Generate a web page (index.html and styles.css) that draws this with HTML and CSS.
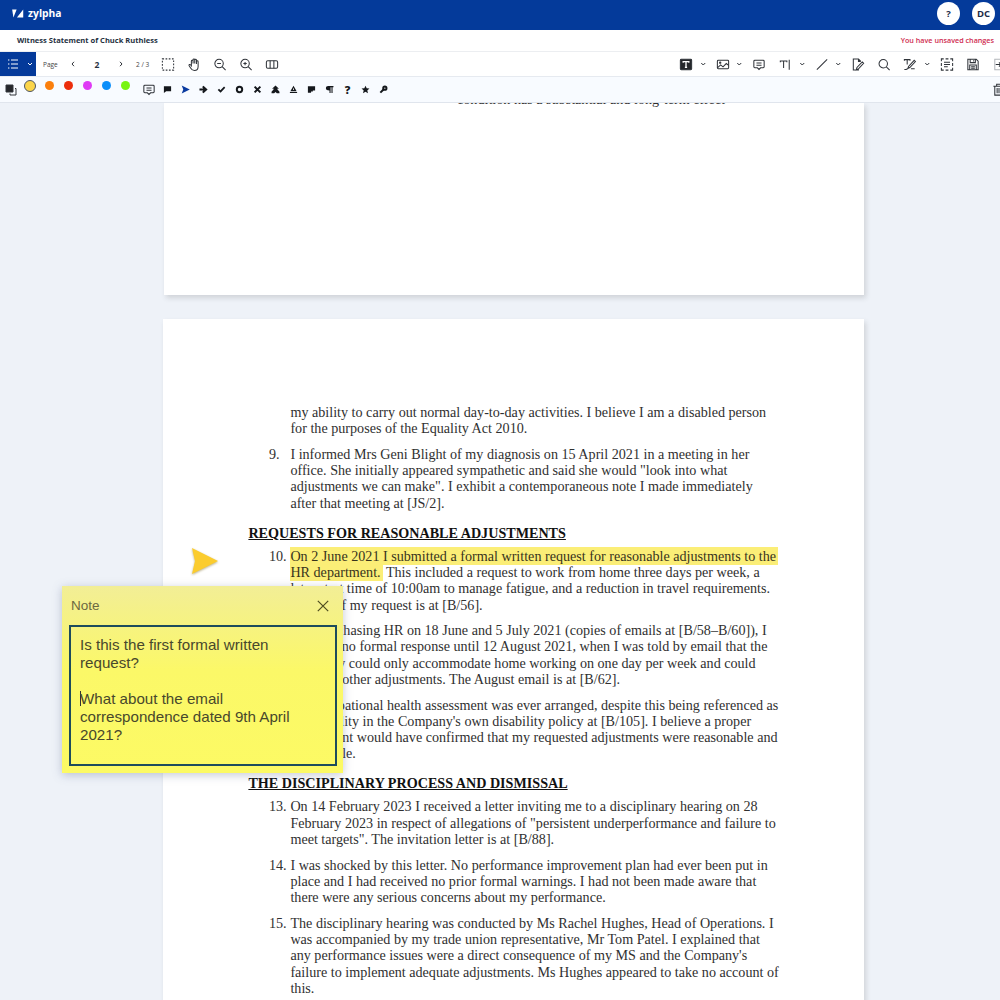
FILE: index.html
```html
<!DOCTYPE html>
<html lang="en">
<head>
    <meta charset="UTF-8">
    <meta name="viewport" content="width=device-width, initial-scale=1.0">
    <title>Witness Statement of Chuck Ruthless</title>
    <link rel="stylesheet" href="styles.css">
</head>
<body>
    <header class="topbar">
        <div class="brand">
            <svg class="logo" viewBox="0 0 13 10"><path d="M0 .5h5L1.4 9.5zM12.3 9.5h-7L12.3.5z"/></svg>
            <span>zylpha</span>
        </div>
        <div class="user">
            <span class="round help">?</span>
            <span class="round">DC</span>
        </div>
    </header>

    <div class="titlebar">
        <h1>Witness Statement of Chuck Ruthless</h1>
        <span class="unsaved">You have unsaved changes</span>
    </div>

    <div class="toolbar">
        <button class="menu">
            <svg class="list" viewBox="0 0 12 12"><path d="M1 2h1.4M1 6h1.4M1 10h1.4M4 2h7M4 6h7M4 10h7"/></svg>
            <svg class="chev" viewBox="0 0 6 6"><path d="M1 2l2 2 2-2"/></svg>
        </button>
        <span class="page-label">Page</span>
        <div class="pager">
            <svg class="chev" viewBox="0 0 6 6"><path d="M4 .8L2 3l2 2.2"/></svg>
            <b>2</b>
            <svg class="chev" viewBox="0 0 6 6"><path d="M2 .8L4 3 2 5.200"/></svg>
        </div>
        <span class="total">2 / 3</span>
        <div class="tools">
            <svg class="icon" viewBox="0 0 16 16"><rect x="2" y="2" width="12" height="12" stroke-dasharray="1.8 1.6"/></svg>
            <svg class="icon" viewBox="0 0 16 16"><path d="M5.200 9.500V4.300a.9.9 0 0 1 1.800 0V7 3a.9.9 0 0 1 1.800 0v4-3.600a.9.9 0 0 1 1.800 0V7.400 5a.9.9 0 0 1 1.800 0v5c0 2.700-1.500 4.300-4 4.300-2 0-3-.8-4-2.600L2.700 9c-.3-.9.8-1.500 1.500-.7z"/></svg>
            <svg class="icon" viewBox="0 0 16 16"><circle cx="7" cy="7" r="4.500"/><path d="M10.300 10.300L14 14M5 7h4"/></svg>
            <svg class="icon" viewBox="0 0 16 16"><circle cx="7" cy="7" r="4.500"/><path d="M10.300 10.300L14 14M5.200 7h3.600M7 5.200v3.600"/></svg>
            <svg class="icon" viewBox="0 0 16 16"><rect x="2" y="4" width="12" height="8" rx="1.500"/><path d="M6 4v8M10 4v8"/></svg>
        </div>
        <div class="tools right">
            <svg class="icon" viewBox="0 0 16 16"><rect class="solid" x="2" y="2.500" width="12" height="11" rx="1"/><path class="white" d="M5 6.200V5h6v1.200M8 5v6M6.800 11h2.400"/></svg>
            <svg class="chev drop" viewBox="0 0 6 6"><path d="M1 2l2 2 2-2"/></svg>
            <svg class="icon" viewBox="0 0 16 16"><rect x="2" y="3.500" width="12" height="9" rx="1"/><path d="M2 11.500l3.500-3 2.500 2 3.500-3.500 2.500 2"/><circle cx="5" cy="6" r=".7"/></svg>
            <svg class="chev drop" viewBox="0 0 6 6"><path d="M1 2l2 2 2-2"/></svg>
            <svg class="icon" viewBox="0 0 16 16"><path d="M3.500 3.500h9a1 1 0 0 1 1 1v6a1 1 0 0 1-1 1H9.700L8 13.300l-1.700-1.800H3.500a1 1 0 0 1-1-1v-6a1 1 0 0 1 1-1zM5.300 6.300h5.400M5.300 8.700h5.400"/></svg>
            <svg class="icon" viewBox="0 0 16 16"><path d="M3 5.500V4.300h7v1.200M6.500 4.300v7.400M12.500 3v10.500"/></svg>
            <svg class="chev drop" viewBox="0 0 6 6"><path d="M1 2l2 2 2-2"/></svg>
            <svg class="icon" viewBox="0 0 16 16"><path d="M2.500 13.500l11-11"/></svg>
            <svg class="chev drop" viewBox="0 0 6 6"><path d="M1 2l2 2 2-2"/></svg>
            <svg class="icon" viewBox="0 0 16 16"><path d="M9 13.800H3V2.200h5.500L11 4.700M12.500 5.200l1.500 1.500-5.500 6-2.300 1 .7-2.500zM8.500 2.200v2.500H11"/></svg>
            <svg class="icon" viewBox="0 0 16 16"><circle cx="7.200" cy="7.200" r="4.500"/><path d="M10.500 10.500L14 14"/></svg>
            <svg class="icon" viewBox="0 0 16 16"><path d="M2 4V2.800h6V4M5 2.800V8M12.500 3.500l1.300 1.300-6 6.500-2 .8.600-2zM2 13.300c2 .6 3-1 4.500-1.200M9 12.500h4"/></svg>
            <svg class="chev drop" viewBox="0 0 6 6"><path d="M1 2l2 2 2-2"/></svg>
            <svg class="icon" viewBox="0 0 16 16"><path d="M2 4.500V2h2.500M6.500 2h3M11.500 2H14v2.500M14 6.500v3M14 11.500V14h-2.500M9.500 14h-3M4.500 14H2v-2.500M2 9.500v-3M4.800 5.500h6.400M4.800 8h6.400M4.800 10.500h4"/></svg>
            <svg class="icon" viewBox="0 0 16 16"><path d="M2.500 2.500h9l2 2v9h-11zM5 2.500v3.500h5.500V2.500M8.700 3.500v1.200M4.500 13.500V8.500h7v5M6 10.300h4M6 12h4"/></svg>
            <svg class="icon exit" viewBox="0 0 16 16"><path class="faint" d="M14 2.500H3.500v11H14"/><path d="M4.500 8H10M8 5.800L10.200 8 8 10.200"/></svg>
        </div>
    </div>

    <div class="toolbar stamps">
        <svg class="layers" viewBox="0 0 12 12"><path d="M10 4.500h1v6.500H5v-1.500"/><path class="solid" d="M1 1h7v7H1z"/></svg>
        <div class="swatches">
            <i class="dot yellow selected"></i>
            <i class="dot orange"></i>
            <i class="dot red"></i>
            <i class="dot purple"></i>
            <i class="dot blue"></i>
            <i class="dot green"></i>
        </div>
        <div class="marks">
            <svg class="icon comment" viewBox="0 0 16 16"><path d="M3.500 3.500h9a1 1 0 0 1 1 1v6a1 1 0 0 1-1 1H9.700L8 13.300l-1.700-1.800H3.500a1 1 0 0 1-1-1v-6a1 1 0 0 1 1-1zM5.300 6.300h5.400M5.300 8.700h5.400"/></svg>
            <svg class="mark" viewBox="0 0 10 10"><path d="M1 1.500h8v5.500H3.500L1 9z"/></svg>
            <svg class="mark active" viewBox="0 0 10 10"><path d="M.8.6L9.800 5 .8 9.400 2.500 5z"/></svg>
            <svg class="mark" viewBox="0 0 10 10"><path d="M.5 3.900h4.200L3.500 2.200 5 .9 9.600 5 5 9.100 3.500 7.800 4.700 6.100H.5z"/></svg>
            <svg class="mark" viewBox="0 0 10 10"><path d="M.8 5.500l1.500-1.300 1.500 1.500 4-4L9.200 3 4 8.500z"/></svg>
            <svg class="mark line" viewBox="0 0 10 10"><circle cx="5" cy="5" r="3"/></svg>
            <svg class="mark line" viewBox="0 0 10 10"><path d="M1.800 1.800l6.400 6.400M8.200 1.800L1.800 8.200"/></svg>
            <svg class="mark" viewBox="0 0 10 10"><path d="M5 .6l3.800 3.700H6.600L9.400 7.500v1.700H6.500L5 7.800 3.500 9.200H.6V7.500l2.800-3.200H1.200z"/></svg>
            <svg class="mark" viewBox="0 0 10 10"><path d="M5 .8L8.500 7h-7zM1 7.700h8V9H1z"/><path class="slit" d="M5 3.800v1.700"/></svg>
            <svg class="mark" viewBox="0 0 10 10"><path d="M1 1.500h8V6H6.500v1.200H4.500V8.500H1z"/></svg>
            <svg class="mark" viewBox="0 0 10 10"><path d="M3.500 1H9.400v1.500H8.400V9H7.200V2.500H6.200V9H5V6C2.500 6 1 5 1 3.500S2 1 3.500 1z"/></svg>
            <span class="mark question">?</span>
            <svg class="mark" viewBox="0 0 10 10"><path d="M5 .7l1.300 2.900 3.100.3L7 6l.8 3.200L5 7.500 2.200 9.200 3 6 .6 3.900l3.100-.3z"/></svg>
            <svg class="mark line" viewBox="0 0 10 10"><circle cx="6.500" cy="3.500" r="1.800"/><path d="M5 5L1.500 8.500"/></svg>
        </div>
        <svg class="icon trash" viewBox="0 0 16 16"><path d="M2 4.500h12M5.500 4.500v-2h5v2M3.500 4.500V14h9V4.500M6 6.500V12M8 6.500V12M10 6.500V12"/></svg>
    </div>

    <main class="viewer">
        <section class="page first">
            <p>condition has a substantial and long-term effect</p>
        </section>

        <section class="page second">
            <div class="item">
                <span class="num"></span>
                <p>my ability to carry out normal day-to-day activities. I believe I am a disabled person<br>
                for the purposes of the Equality Act 2010.</p>
            </div>
            <div class="item">
                <span class="num">9.</span>
                <p>I informed Mrs Geni Blight of my diagnosis on 15 April 2021 in a meeting in her<br>
                office. She initially appeared sympathetic and said she would "look into what<br>
                adjustments we can make". I exhibit a contemporaneous note I made immediately<br>
                after that meeting at [JS/2].</p>
            </div>
            <h2>REQUESTS FOR REASONABLE ADJUSTMENTS</h2>
            <div class="item">
                <span class="num">10.</span>
                <p><mark>On 2 June 2021 I submitted a formal written request for reasonable adjustments to the</mark><br>
                <mark>HR department.</mark> This included a request to work from home three days per week, a<br>
                later start time of 10:00am to manage fatigue, and a reduction in travel requirements.<br>
                A copy of my request is at [B/56].</p>
            </div>
            <div class="item">
                <span class="num">11.</span>
                <p>Despite chasing HR on 18 June and 5 July 2021 (copies of emails at [B/58–B/60]), I<br>
                received no formal response until 12 August 2021, when I was told by email that the<br>
                Company could only accommodate home working on one day per week and could<br>
                make no other adjustments. The August email is at [B/62].</p>
            </div>
            <div class="item">
                <span class="num">12.</span>
                <p>No occupational health assessment was ever arranged, despite this being referenced as<br>
                a possibility in the Company's own disability policy at [B/105]. I believe a proper<br>
                assessment would have confirmed that my requested adjustments were reasonable and<br>
                practicable.</p>
            </div>
            <h2>THE DISCIPLINARY PROCESS AND DISMISSAL</h2>
            <div class="item">
                <span class="num">13.</span>
                <p>On 14 February 2023 I received a letter inviting me to a disciplinary hearing on 28<br>
                February 2023 in respect of allegations of "persistent underperformance and failure to<br>
                meet targets". The invitation letter is at [B/88].</p>
            </div>
            <div class="item">
                <span class="num">14.</span>
                <p>I was shocked by this letter. No performance improvement plan had ever been put in<br>
                place and I had received no prior formal warnings. I had not been made aware that<br>
                there were any serious concerns about my performance.</p>
            </div>
            <div class="item">
                <span class="num">15.</span>
                <p>The disciplinary hearing was conducted by Ms Rachel Hughes, Head of Operations. I<br>
                was accompanied by my trade union representative, Mr Tom Patel. I explained that<br>
                any performance issues were a direct consequence of my MS and the Company's<br>
                failure to implement adequate adjustments. Ms Hughes appeared to take no account of<br>
                this.</p>
            </div>
        </section>

        <svg class="pin" viewBox="0 0 30 30"><path d="M2 2l26 13L2 28l3-13z"/></svg>

        <div class="note">
            <div class="note-head">
                <span>Note</span>
                <svg viewBox="0 0 12 12"><path d="M.8.8l10.400 10.400M11.200.8L.8 11.200"/></svg>
            </div>
            <div class="note-body">
                <p>Is this the first formal written<br>request?</p>
                <p><i class="caret"></i>What about the email<br>correspondence dated 9th April<br>2021?</p>
            </div>
        </div>
    </main>
</body>
</html>
```

FILE: styles.css
```css
* {
    box-sizing: border-box;
}

body {
    margin: 0;
    height: 1000px;
    overflow: hidden;
    display: flex;
    flex-direction: column;
    font-family: "Open Sans", sans-serif;
    color: #26313f;
    background-color: #eef2f8;
}

p, h1, h2 {
    margin: 0;
}

svg {
    display: block;
    flex: none;
    fill: none;
    stroke: #30343a;
}

/* header */
.topbar {
    flex: none;
    height: 30px;
    padding: 0 5px 4px 12px;
    display: flex;
    justify-content: space-between;
    align-items: center;
    background-color: #043a9a;
}

.brand {
    display: flex;
    align-items: center;
    gap: 4px;
    color: white;
    font-size: 10.3px;
    font-weight: bold;
    line-height: 12px;
}

.logo {
    width: 12px;
    height: 9px;
    fill: white;
    stroke: none;
}

.user {
    display: flex;
    gap: 12px;
}

.round {
    width: 23px;
    height: 23px;
    border-radius: 50%;
    background-color: white;
    color: #1c2c48;
    font-size: 9.5px;
    font-weight: bold;
    line-height: 23px;
    text-align: center;
}

.titlebar {
    flex: none;
    height: 22px;
    padding: 0 6px 1px 17px;
    display: flex;
    justify-content: space-between;
    align-items: center;
    background-color: white;
    border-bottom: 1px solid #eceef1;
}

.titlebar h1 {
    font-size: 7.56px;
    font-weight: bold;
}

.unsaved {
    color: #cf2b50;
    font-size: 7.2px;
    font-weight: 600;
}

/* toolbars */
.toolbar {
    flex: none;
    height: 24px;
    display: flex;
    align-items: center;
    background-color: white;
}

.menu {
    width: 36px;
    height: 24px;
    padding: 0 3px 0 7px;
    border: none;
    display: flex;
    justify-content: space-between;
    align-items: center;
    background-color: #043a9a;
}

.menu svg {
    stroke: white;
}

.list {
    width: 12px;
    height: 12px;
}

.chev {
    width: 6px;
    height: 6px;
}

.page-label,
.total {
    font-size: 6.5px;
    color: #444;
}

.page-label {
    width: 18px;
    margin-left: 7px;
}

.pager {
    width: 72px;
    display: grid;
    grid-template-columns: repeat(3, 24px);
    place-items: center;
    font-size: 8.5px;
}

.total {
    width: 22px;
    padding-left: 3px;
    white-space: nowrap;
}

.tools {
    display: flex;
    align-items: center;
}

.tools.right {
    margin-left: auto;
    margin-right: -11.5px;
}

.icon {
    width: 26px;
    height: 15px;
    stroke-width: 1.1;
}

.chev.drop {
    width: 10.5px;
    margin: 0 1.5px 0 -1.5px;
}

.solid {
    fill: #25272b;
}

.white {
    fill: none;
    stroke: white;
    stroke-width: 1.4;
}

.faint {
    stroke: #b3b6bb;
}

.stamps {
    height: 27px;
    border-top: 1px solid #e6eaf0;
    border-bottom: 1px solid #e0e5ed;
    background-color: #f8fbff;
}

.layers {
    width: 12px;
    height: 12px;
    margin-left: 5px;
}

.swatches {
    width: 114px;
    margin: 0 0 8px 3.5px;
    display: grid;
    grid-template-columns: repeat(6, 19px);
    place-items: center;
}

.dot {
    width: 9px;
    height: 9px;
    border-radius: 50%;
}

.dot.selected {
    width: 12px;
    height: 12px;
    border: 1.5px solid #4c5668;
}

.yellow { background-color: #fbd54a; }
.orange { background-color: #fb7f0c; }
.red { background-color: #ec2d0c; }
.purple { background-color: #df3af5; }
.blue { background-color: #0c8ffa; }
.green { background-color: #78f411; }

.marks {
    display: flex;
    align-items: center;
    gap: 9px;
    margin-left: 1px;
}

.icon.comment {
    margin-right: -7.5px;
}

.mark {
    width: 9px;
    height: 9px;
    fill: #15181c;
    stroke: none;
}

.mark.active {
    fill: #0b3ba0;
}

.mark.line {
    fill: none;
    stroke: #15181c;
    stroke-width: 2.2;
}

.slit {
    stroke: white;
}

.question {
    font-size: 11px;
    font-weight: 800;
    line-height: 9px;
    text-align: center;
    color: #15181c;
}

.trash {
    margin-left: auto;
    margin-right: -12px;
}

/* document */
.viewer {
    position: relative;
    flex: 1;
    min-height: 0;
    overflow: hidden;
}

.page {
    background-color: white;
    box-shadow: 2px 3px 5px rgba(60, 60, 60, 0.17);
    font-family: "Liberation Serif", serif;
    font-size: 14.13px;
    line-height: 16.3px;
    color: #303030;
    white-space: nowrap;
}

.first {
    width: 700px;
    height: 192px;
    margin-left: 164px;
    padding-left: 293px;
    overflow: hidden;
}

.first p {
    margin-top: -12px;
}

.second {
    width: 701px;
    height: 800px;
    margin: 24px 0 0 163px;
    padding: 85px 0 0 85.4px;
}

.item {
    display: flex;
    margin-bottom: 9.2px;
}

.num {
    width: 42px;
    padding-left: 20.5px;
    flex: none;
}

.second h2 {
    margin: 13.8px 0 6.7px;
    font-size: 14.13px;
    font-weight: bold;
    color: #111;
    text-decoration: underline;
}

mark {
    padding: 1px 2px 1px 0;
    background-color: #fbee77;
    color: #38341c;
}

.pin {
    position: absolute;
    left: 190px;
    top: 443px;
    width: 30px;
    height: 30px;
    fill: #fbcc2e;
    stroke: none;
    filter: drop-shadow(0 1px 1px rgba(120, 100, 20, 0.5));
}

/* sticky note */
.note {
    position: absolute;
    left: 62px;
    top: 483px;
    width: 281px;
    height: 187px;
    padding: 0 6px 7px 7px;
    display: flex;
    flex-direction: column;
    background: linear-gradient(#f2ee96, #fbf868 45%, #fcfa64);
    box-shadow: 0 2px 9px rgba(90, 100, 140, 0.35);
    font-family: "Liberation Sans", sans-serif;
    color: #48482c;
}

.note-head {
    flex: none;
    height: 39px;
    padding: 0 8px 0 2px;
    display: flex;
    justify-content: space-between;
    align-items: center;
    font-size: 13.5px;
    color: #6b6842;
}

.note-head svg {
    width: 12px;
    height: 12px;
    stroke: #4e4c20;
    stroke-width: 1.2;
}

.note-body {
    flex: 1;
    padding: 9px 9px 0;
    border: 2px solid #1d4c5c;
    font-size: 15.15px;
    line-height: 18px;
    white-space: nowrap;
}

.note-body p + p {
    margin-top: 18px;
}

.caret {
    float: left;
    width: 1px;
    height: 15px;
    margin: 1px -1px 0 0;
    background-color: #333;
}
```
